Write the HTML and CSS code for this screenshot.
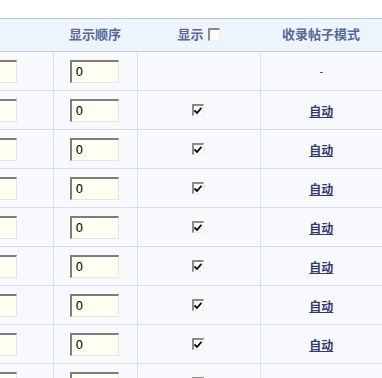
FILE: index.html
```html
<!DOCTYPE html>
<html>
<head>
<meta charset="utf-8">
<link rel="stylesheet" href="styles.css">
</head>
<body>
<div class="wrap">
<table class="grid">
<colgroup><col class="c1"><col class="c2"><col class="c3"><col class="c4"></colgroup>
<thead>
<tr>
<th></th>
<th>显示顺序</th>
<th><span class="hlabel">显示</span><span class="cb"></span></th>
<th>收录帖子模式</th>
</tr>
</thead>
<tbody>
<tr>
<td><span class="inp"></span></td>
<td><span class="inp">0</span></td>
<td class="mid"></td>
<td class="mid dash">-</td>
</tr>
<tr><td><span class="inp"></span></td><td><span class="inp">0</span></td><td class="mid"><span class="cb on"><svg width="8" height="7" viewBox="0 0 8 7"><path d="M0.5 3.5 L3 6 L7.5 0.8" fill="none" stroke="#000" stroke-width="1.8"/></svg></span></td><td class="mid"><a class="lnk" href="#">自动</a></td></tr>
<tr><td><span class="inp"></span></td><td><span class="inp">0</span></td><td class="mid"><span class="cb on"><svg width="8" height="7" viewBox="0 0 8 7"><path d="M0.5 3.5 L3 6 L7.5 0.8" fill="none" stroke="#000" stroke-width="1.8"/></svg></span></td><td class="mid"><a class="lnk" href="#">自动</a></td></tr>
<tr><td><span class="inp"></span></td><td><span class="inp">0</span></td><td class="mid"><span class="cb on"><svg width="8" height="7" viewBox="0 0 8 7"><path d="M0.5 3.5 L3 6 L7.5 0.8" fill="none" stroke="#000" stroke-width="1.8"/></svg></span></td><td class="mid"><a class="lnk" href="#">自动</a></td></tr>
<tr><td><span class="inp"></span></td><td><span class="inp">0</span></td><td class="mid"><span class="cb on"><svg width="8" height="7" viewBox="0 0 8 7"><path d="M0.5 3.5 L3 6 L7.5 0.8" fill="none" stroke="#000" stroke-width="1.8"/></svg></span></td><td class="mid"><a class="lnk" href="#">自动</a></td></tr>
<tr><td><span class="inp"></span></td><td><span class="inp">0</span></td><td class="mid"><span class="cb on"><svg width="8" height="7" viewBox="0 0 8 7"><path d="M0.5 3.5 L3 6 L7.5 0.8" fill="none" stroke="#000" stroke-width="1.8"/></svg></span></td><td class="mid"><a class="lnk" href="#">自动</a></td></tr>
<tr><td><span class="inp"></span></td><td><span class="inp">0</span></td><td class="mid"><span class="cb on"><svg width="8" height="7" viewBox="0 0 8 7"><path d="M0.5 3.5 L3 6 L7.5 0.8" fill="none" stroke="#000" stroke-width="1.8"/></svg></span></td><td class="mid"><a class="lnk" href="#">自动</a></td></tr>
<tr><td><span class="inp"></span></td><td><span class="inp">0</span></td><td class="mid"><span class="cb on"><svg width="8" height="7" viewBox="0 0 8 7"><path d="M0.5 3.5 L3 6 L7.5 0.8" fill="none" stroke="#000" stroke-width="1.8"/></svg></span></td><td class="mid"><a class="lnk" href="#">自动</a></td></tr>
<tr><td><span class="inp"></span></td><td><span class="inp">0</span></td><td class="mid"><span class="cb on"><svg width="8" height="7" viewBox="0 0 8 7"><path d="M0.5 3.5 L3 6 L7.5 0.8" fill="none" stroke="#000" stroke-width="1.8"/></svg></span></td><td class="mid"><a class="lnk" href="#">自动</a></td></tr>
</tbody>
</table>
</div>
</body>
</html>
```
FILE: styles.css
```css
html, body {
  margin: 0;
  padding: 0;
  background: #ffffff;
  overflow: hidden;
}
.wrap {
  padding-top: 18px;
  width: 382px;
  overflow: hidden;
}
.grid {
  border-collapse: collapse;
  table-layout: fixed;
  width: 430px;
  margin-left: -48px;
  font-family: "Noto Sans CJK SC", "Liberation Sans", sans-serif;
  font-size: 12px;
}
.c1 { width: 101px; }
.c2 { width: 84px; }
.c3 { width: 123px; }
.c4 { width: 122px; }
.grid th {
  height: 30px;
  padding: 0 0 2px 0;
  background: #eef4fb;
  color: #56679a;
  font-size: 13px;
  font-weight: bold;
  text-align: center;
  border-top: 1px solid #b9c6d3;
  border-bottom: 1px solid #c3cedb;
  white-space: nowrap;
  line-height: 14px;
}
.hlabel {
  vertical-align: middle;
}
.grid td {
  height: 38px;
  padding: 0 0 0 16px;
  background: #f7f9fd;
  border-bottom: 1px solid #d9dde5;
  border-left: 1px solid #dde1e8;
  vertical-align: middle;
}
.grid td:first-child { border-left: none; }
.grid td.mid {
  padding: 0;
  text-align: center;
}
.dash {
  color: #333;
  font-family: "Liberation Sans", sans-serif;
  font-size: 11px;
}
.inp {
  display: flex;
  align-items: center;
  box-sizing: border-box;
  width: 49px;
  height: 23px;
  padding-left: 4px;
  background: #fffff2;
  border-top: 2px solid #7d7d7d;
  border-left: 2px solid #7d7d7d;
  border-right: 1px solid #e6e6dc;
  border-bottom: 1px solid #e6e6dc;
  font-family: "DejaVu Sans", sans-serif;
  font-size: 12px;
  color: #000;
}
.cb {
  display: inline-flex;
  align-items: center;
  justify-content: center;
  box-sizing: border-box;
  width: 12px;
  height: 13px;
  margin-left: 4px;
  vertical-align: middle;
  background: #fdfdf3;
  border-top: 2px solid #8a8a8a;
  border-left: 2px solid #8a8a8a;
  border-right: 1px solid #eeeeea;
  border-bottom: 1px solid #eeeeea;
}
.cb.on {
  display: flex;
  height: 12px;
  margin: 0 auto;
  transform: translateX(-1px);
}
.lnk {
  color: #343a6b;
  font-weight: bold;
  text-decoration: underline;
  line-height: 12px;
}
```
